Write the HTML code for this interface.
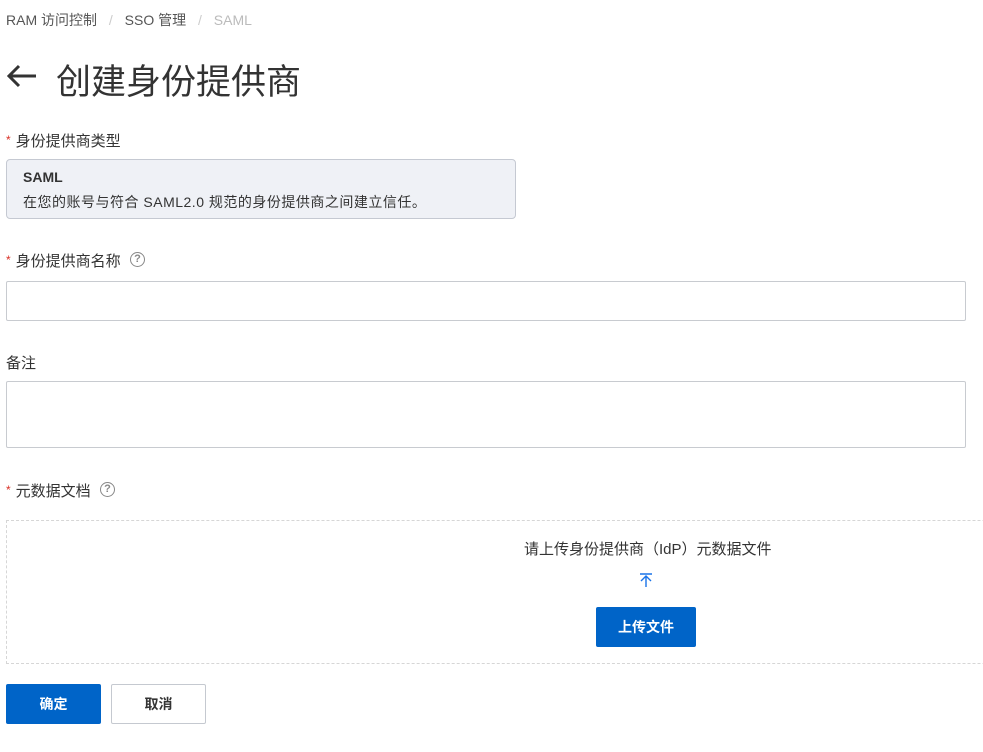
<!DOCTYPE html>
<html><head><meta charset="utf-8"><style>
*{margin:0;padding:0;box-sizing:border-box}
body{width:983px;height:752px;overflow:hidden;background:#fff;font-family:"Liberation Sans","Noto Sans CJK SC",sans-serif;color:#333;position:relative}
.a{position:absolute;white-space:nowrap}
.lbl{font-size:15px;color:#333}
.lbl b{color:#d93026;font-weight:normal;font-size:12px;margin-right:5px;position:relative;top:-2px}
.q{position:absolute;width:15px;height:15px;border:1.4px solid #888;border-radius:50%;font-size:11px;line-height:13px;text-align:center;color:#888;font-weight:bold}
.inp{position:absolute;border:1px solid #c8cbd0;border-radius:2px;background:#fff}
.btn{position:absolute;border-radius:2px;font-size:14px;font-weight:bold;text-align:center}
</style></head><body>
<div class="a" style="left:6px;top:10px;font-size:14px;color:#555">RAM 访问控制 <span style="color:#ccc;margin:0 8px">/</span> SSO 管理 <span style="color:#ccc;margin:0 8px">/</span> <span style="color:#bbb">SAML</span></div>
<svg class="a" style="left:6px;top:64px" width="32" height="24" viewBox="0 0 32 24"><path d="M30 12H3M13 2L3 12l10 10" fill="none" stroke="#333" stroke-width="3"/></svg>
<div class="a" style="left:56px;top:54px;font-size:35px;color:#333">创建身份提供商</div>
<div class="a lbl" style="left:6px;top:130px"><b>*</b>身份提供商类型</div>
<div class="a" style="left:6px;top:159px;width:510px;height:60px;background:#eff1f6;border:1px solid #c5c9d2;border-radius:4px"></div>
<div class="a" style="left:23px;top:169px;font-size:14px;font-weight:bold;color:#333">SAML</div>
<div class="a" style="left:23px;top:192px;font-size:14px;letter-spacing:0.5px;color:#333">在您的账号与符合 SAML2.0 规范的身份提供商之间建立信任。</div>
<div class="a lbl" style="left:6px;top:250px"><b>*</b>身份提供商名称</div>
<div class="q" style="left:130px;top:252px">?</div>
<div class="inp" style="left:6px;top:281px;width:960px;height:40px"></div>
<div class="a lbl" style="left:6px;top:352px">备注</div>
<div class="inp" style="left:6px;top:381px;width:960px;height:67px"></div>
<div class="a lbl" style="left:6px;top:480px"><b>*</b>元数据文档</div>
<div class="q" style="left:100px;top:482px">?</div>
<div class="a" style="left:6px;top:520px;width:1280px;height:144px;border:1px dashed #d6d6d6"></div>
<div class="a" style="left:524px;top:538px;font-size:15px;color:#333">请上传身份提供商（IdP）元数据文件</div>
<svg class="a" style="left:638px;top:572px" width="16" height="16" viewBox="0 0 16 16"><path d="M2 2H14M8 4V15M3 9l5-5 5 5" fill="none" stroke="#1a73e8" stroke-width="1.4"/></svg>
<div class="btn" style="left:596px;top:607px;width:100px;height:40px;line-height:40px;background:#0064c8;color:#fff">上传文件</div>
<div class="btn" style="left:6px;top:684px;width:95px;height:40px;line-height:40px;background:#0064c8;color:#fff">确定</div>
<div class="btn" style="left:111px;top:684px;width:95px;height:40px;line-height:38px;background:#fff;border:1px solid #c5c9d0;color:#333">取消</div>
</body></html>
